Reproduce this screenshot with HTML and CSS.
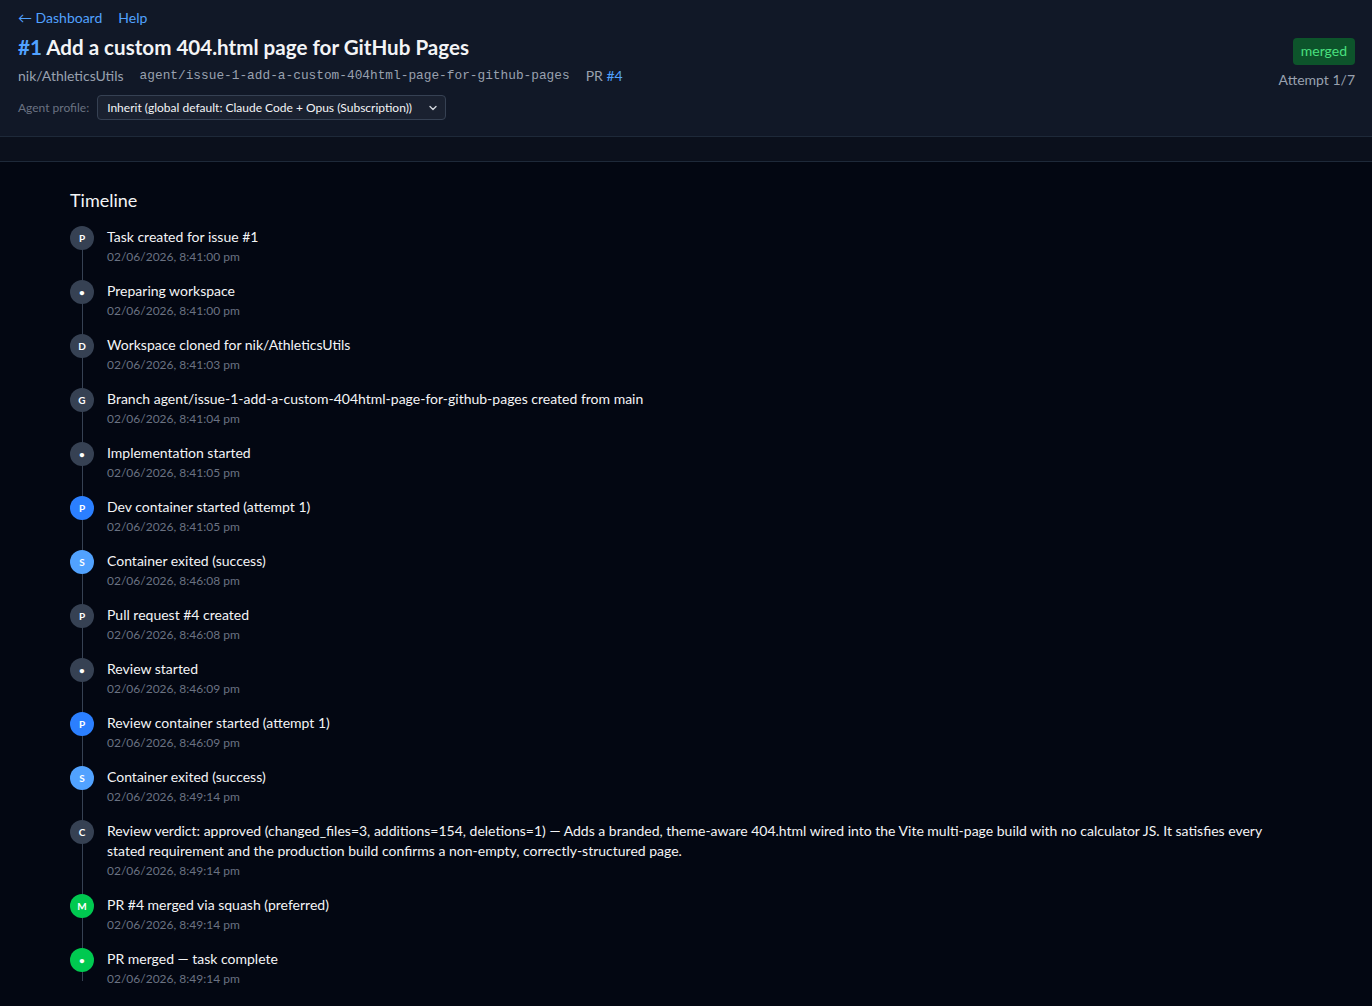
FILE: index.html
```html
<!DOCTYPE html>
<html lang="en">
<head>
<meta charset="utf-8">
<title>#1 Add a custom 404.html page for GitHub Pages</title>
<link rel="stylesheet" href="styles.css">
</head>
<body>
<header class="header">
  <div class="header-left">
    <nav class="nav">
      <a class="link" href="#">← Dashboard</a>
      <a class="link" href="#">Help</a>
    </nav>
    <h1 class="title"><span class="num">#1</span> Add a custom 404.html page for GitHub Pages</h1>
    <div class="meta">
      <span>nik/AthleticsUtils</span>
      <span class="mono">agent/issue-1-add-a-custom-404html-page-for-github-pages</span>
      <span>PR <a class="link" href="#">#4</a></span>
    </div>
    <div class="profile">
      <span class="profile-label">Agent profile:</span>
      <div class="select">
        <span>Inherit (global default: Claude Code + Opus (Subscription))</span>
        <svg class="chev" width="10" height="10" viewBox="0 0 10 10"><path d="M2 3.5 L5 6.5 L8 3.5" fill="none" stroke="#d1d5dc" stroke-width="1.4" stroke-linecap="round" stroke-linejoin="round"/></svg>
      </div>
    </div>
  </div>
  <div class="header-right">
    <span class="badge">merged</span>
    <span class="attempt">Attempt 1/7</span>
  </div>
</header>
<div class="strip"></div>
<main class="main">
  <h2 class="section-title">Timeline</h2>
  <ol class="timeline">
    <li class="item"><span class="dot gray">P</span><div class="body"><div class="text">Task created for issue #1</div><div class="date">02/06/2026, 8:41:00 pm</div></div></li>
    <li class="item"><span class="dot gray">•</span><div class="body"><div class="text">Preparing workspace</div><div class="date">02/06/2026, 8:41:00 pm</div></div></li>
    <li class="item"><span class="dot gray">D</span><div class="body"><div class="text">Workspace cloned for nik/AthleticsUtils</div><div class="date">02/06/2026, 8:41:03 pm</div></div></li>
    <li class="item"><span class="dot gray">G</span><div class="body"><div class="text">Branch agent/issue-1-add-a-custom-404html-page-for-github-pages created from main</div><div class="date">02/06/2026, 8:41:04 pm</div></div></li>
    <li class="item"><span class="dot gray">•</span><div class="body"><div class="text">Implementation started</div><div class="date">02/06/2026, 8:41:05 pm</div></div></li>
    <li class="item"><span class="dot blue">P</span><div class="body"><div class="text">Dev container started (attempt 1)</div><div class="date">02/06/2026, 8:41:05 pm</div></div></li>
    <li class="item"><span class="dot lightblue">S</span><div class="body"><div class="text">Container exited (success)</div><div class="date">02/06/2026, 8:46:08 pm</div></div></li>
    <li class="item"><span class="dot gray">P</span><div class="body"><div class="text">Pull request #4 created</div><div class="date">02/06/2026, 8:46:08 pm</div></div></li>
    <li class="item"><span class="dot gray">•</span><div class="body"><div class="text">Review started</div><div class="date">02/06/2026, 8:46:09 pm</div></div></li>
    <li class="item"><span class="dot blue">P</span><div class="body"><div class="text">Review container started (attempt 1)</div><div class="date">02/06/2026, 8:46:09 pm</div></div></li>
    <li class="item"><span class="dot lightblue">S</span><div class="body"><div class="text">Container exited (success)</div><div class="date">02/06/2026, 8:49:14 pm</div></div></li>
    <li class="item"><span class="dot gray">C</span><div class="body"><div class="text">Review verdict: approved (changed_files=3, additions=154, deletions=1) — Adds a branded, theme-aware 404.html wired into the Vite multi-page build with no calculator JS. It satisfies every stated requirement and the production build confirms a non-empty, correctly-structured page.</div><div class="date">02/06/2026, 8:49:14 pm</div></div></li>
    <li class="item"><span class="dot green">M</span><div class="body"><div class="text">PR #4 merged via squash (preferred)</div><div class="date">02/06/2026, 8:49:14 pm</div></div></li>
    <li class="item"><span class="dot green">•</span><div class="body"><div class="text">PR merged — task complete</div><div class="date">02/06/2026, 8:49:14 pm</div></div></li>
  </ol>
</main>
</body>
</html>
```
FILE: styles.css
```css
* { box-sizing: border-box; }
html, body { margin: 0; padding: 0; }
body {
  background: #030712;
  color: #e5e7eb;
  font-family: Lato, "Noto Sans", sans-serif;
  font-size: 14px;
  line-height: 20px;
  min-height: 1006px;
}
a { text-decoration: none; }
.link { color: #51a2ff; }

.header {
  background: #111827;
  border-bottom: 1px solid #1e2939;
  display: flex;
  justify-content: space-between;
  padding: 8px 17px 16px 18px;
  height: 137px;
}
.nav { display: flex; gap: 16px; font-size: 14px; }
.title {
  margin: 5px 0 0 0;
  font-size: 20.6px;
  line-height: 28px;
  font-weight: 700;
  color: #f3f4f6;
}
.num { color: #51a2ff; }
.meta {
  margin-top: 5px;
  display: flex;
  gap: 16px;
  color: #99a1af;
  font-size: 14px;
}
.mono { font-family: "Liberation Mono", "DejaVu Sans Mono", monospace; font-size: 12.8px; }
.profile {
  margin-top: 9px;
  display: flex;
  align-items: center;
  gap: 8px;
}
.profile-label { font-size: 12px; color: #6a7282; }
.select {
  display: flex;
  align-items: center;
  gap: 16px;
  height: 25px;
  padding: 0 7px 0 9px;
  background: #1a2130;
  border: 1px solid #364153;
  border-radius: 4px;
  font-size: 12px;
  color: #f3f4f6;
}
.chev { display: block; }
.header-right {
  display: flex;
  flex-direction: column;
  align-items: flex-end;
  padding-top: 30px;
  gap: 5px;
}
.badge {
  background: #0d542b;
  color: #4ae07f;
  border-radius: 4px;
  padding: 3px 8px 4px;
  font-size: 14px;
}
.attempt { color: #99a1af; font-size: 14px; }

.strip {
  height: 25px;
  background: #0b101c;
  border-bottom: 1px solid #1e2939;
}

.main { padding: 25px 70px 0 70px; }
.section-title {
  margin: 0 0 14px 0;
  font-size: 18px;
  line-height: 26px;
  font-weight: 400;
  color: #f3f4f6;
}
.timeline {
  list-style: none;
  margin: 0;
  padding: 0;
  position: relative;
}
.timeline::before {
  content: "";
  position: absolute;
  left: 12px;
  top: 12px;
  bottom: 6px;
  width: 1px;
  background: #364153;
}
.item {
  display: flex;
  gap: 13px;
  padding-bottom: 16px;
  position: relative;
}
.item:last-child { padding-bottom: 0; }
.dot {
  flex: none;
  width: 24px;
  height: 24px;
  border-radius: 50%;
  display: flex;
  align-items: center;
  justify-content: center;
  font-size: 10px;
  font-weight: 700;
  color: #ffffff;
  position: relative;
  z-index: 1;
  margin-top: -1px;
}
.gray { background: #364153; }
.blue { background: #2b7fff; }
.lightblue { background: #51a2ff; }
.green { background: #00c950; }
.body { min-width: 0; }
.text { color: #f3f4f6; }
.date { color: #6a7282; font-size: 12px; line-height: 18px; padding-top: 1px; margin-bottom: -1px; }
```
